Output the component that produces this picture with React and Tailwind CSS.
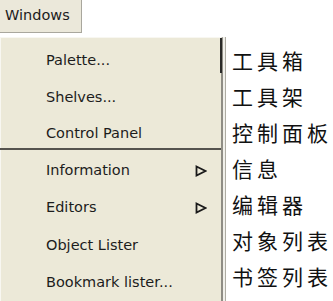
import React from "react";

const items = [
  { label: "Palette...", h: "h-[37px]" },
  { label: "Shelves...", h: "h-[37px]" },
  { label: "Control Panel", h: "h-[32px] pt-[4px]", sep: true },
  { label: "Information", h: "h-[37.5px]", sub: true },
  { label: "Editors", h: "h-[37.5px]", sub: true },
  { label: "Object Lister", h: "h-[37.5px]" },
  { label: "Bookmark lister...", h: "h-[37.5px]" },
];

const zh = ["工具箱", "工具架", "控制面板", "信息", "编辑器", "对象列表", "书签列表"];

function SubArrow() {
  return (
    <svg width="12" height="12" viewBox="0 0 12 12" className="mr-[14px]">
      <path d="M1.5 1.5 L10.5 6 L1.5 10.5 Z" fill="none" stroke="#1a1a1a" strokeWidth="1.8" strokeLinejoin="miter" />
    </svg>
  );
}

export default function App() {
  return (
    <div className="relative w-[333px] h-[301px] overflow-hidden bg-white font-['DejaVu_Sans',sans-serif] text-[#1c1c1c]">
      {/* menu bar tab */}
      <div className="w-[82px] h-[33px] bg-[#ebe8da] border-r border-b border-[#a9a79d] flex items-center pl-[5px] text-[14.5px]">
        Windows
      </div>

      <div className="flex">
        {/* dropdown */}
        <div className="relative mt-[4px] w-[226px] h-[280px] bg-[#f1f0ea] border-r border-[#aeaca3]">
          <div className="w-[223px] h-full bg-[#ece9d8] border-l border-t border-[#f8f7f1] border-r-2 border-r-[#8f8d85] pt-[4px]">
            {items.map((it) => (
              <React.Fragment key={it.label}>
                <div className={`flex items-center pl-[45px] text-[14.5px] ${it.h}`}>
                  <span className="flex-1">{it.label}</span>
                  {it.sub && <SubArrow />}
                </div>
                {it.sep && <div className="-ml-[1px] h-[2px] bg-[#55534e] mb-[2px]" />}
              </React.Fragment>
            ))}
          </div>
          {/* scroll thumb */}
          <div className="absolute left-[220px] top-[1px] w-[2px] h-[35px] bg-[#2a2a28]" />
        </div>

        {/* chinese labels */}
        <div className="ml-[6px] pt-[9px] flex flex-col font-['Noto_Sans_CJK_SC',sans-serif] text-[21px] leading-[36px] tracking-[4px] text-[#111]">
          {zh.map((t) => (
            <div key={t} className="whitespace-nowrap">{t}</div>
          ))}
        </div>
      </div>
    </div>
  );
}
